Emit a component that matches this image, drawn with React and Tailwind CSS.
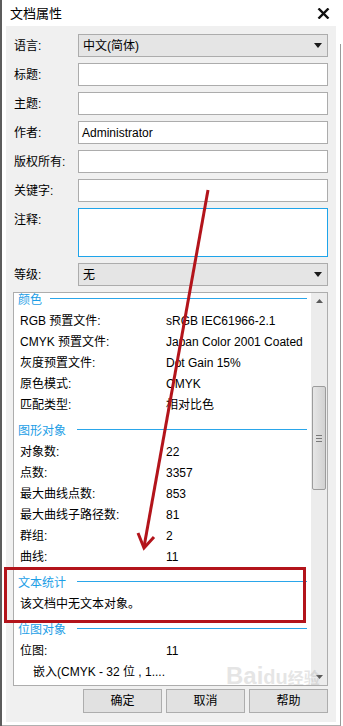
import React from 'react';

const font = "font-['Liberation_Sans','Noto_Sans_CJK_SC',sans-serif]";

const formRows = [
  { label: '语言:', kind: 'select', value: '中文(简体)' },
  { label: '标题:', kind: 'input' },
  { label: '主题:', kind: 'input' },
  { label: '作者:', kind: 'input', value: 'Administrator' },
  { label: '版权所有:', kind: 'input' },
  { label: '关键字:', kind: 'input' },
  { label: '注释:', kind: 'note' },
  { label: '等级:', kind: 'select', value: '无' },
];

const sections = [
  {
    title: '颜色',
    gap: 'ml-[8px]',
    rows: [
      ['RGB 预置文件:', 'sRGB IEC61966-2.1'],
      ['CMYK 预置文件:', 'Japan Color 2001 Coated'],
      ['灰度预置文件:', 'Dot Gain 15%'],
      ['原色模式:', 'CMYK'],
      ['匹配类型:', '相对比色'],
    ],
  },
  {
    title: '图形对象',
    gap: 'ml-[11px]',
    rows: [
      ['对象数:', '22'],
      ['点数:', '3357'],
      ['最大曲线点数:', '853'],
      ['最大曲线子路径数:', '81'],
      ['群组:', '2'],
      ['曲线:', '11'],
    ],
  },
  {
    title: '文本统计',
    gap: 'ml-[11px]',
    rows: [['该文档中无文本对象。', '']],
  },
  {
    title: '位图对象',
    gap: 'ml-[11px]',
    rows: [['位图:', '11']],
    extra: '嵌入(CMYK - 32 位 , 1....',
  },
];

function DownTriangle() {
  return (
    <svg width="8" height="5" viewBox="0 0 8 5">
      <path d="M0 0 H8 L4 5 Z" fill="#1a1a1a" />
    </svg>
  );
}

function FormRow({ row }) {
  let control;
  if (row.kind === 'select') {
    control = (
      <div className="flex-1 h-[23px] bg-[#e5e5e5] border border-[#acacac] flex items-center justify-between pl-[4px] pr-[5px]">
        <span className="text-[12px] leading-none text-black">{row.value}</span>
        <DownTriangle />
      </div>
    );
  } else if (row.kind === 'note') {
    control = <div className="flex-1 h-[49px] bg-white border border-[#1ea4ea]" />;
  } else {
    control = (
      <div className="flex-1 h-[23px] bg-white border border-[#acacac] flex items-center pl-[3px]">
        <span className="text-[12px] leading-none text-black">{row.value}</span>
      </div>
    );
  }
  return (
    <div className="flex items-start">
      <div
        className={
          'w-[64px] shrink-0 text-[12px] text-black leading-none ' +
          (row.kind === 'note' ? 'pt-[6px]' : 'h-[23px] flex items-center')
        }
      >
        {row.label}
      </div>
      {control}
    </div>
  );
}

function Section({ section, first }) {
  return (
    <div className={first ? '' : 'mt-[5px]'}>
      <div className="h-[21px] flex items-center pl-[4px]">
        <span className="text-[12px] leading-none text-[#1c9ee6]">{section.title}</span>
        <div className={'flex-1 h-px bg-[#2aa6ea] -mt-[2px] mr-[4px] ' + section.gap} />
      </div>
      {section.rows.map(([k, v]) => (
        <div key={k} className="h-[21px] flex items-center pl-[6px] text-[12px] leading-none text-black">
          <span className="w-[146px] shrink-0 whitespace-nowrap">{k}</span>
          <span className="whitespace-nowrap">{v}</span>
        </div>
      ))}
      {section.extra && (
        <div className="h-[21px] flex items-center pl-[19px] text-[12px] leading-none text-black whitespace-nowrap">
          {section.extra}
        </div>
      )}
    </div>
  );
}

function Scrollbar() {
  return (
    <div className="w-[16px] shrink-0 bg-[#ececec] flex flex-col items-center">
      <div className="h-[16px] flex items-center justify-center">
        <svg width="7" height="4" viewBox="0 0 7 4">
          <path d="M0 4 H7 L3.5 0 Z" fill="#5a5a5a" />
        </svg>
      </div>
      <div className="h-[77px]" />
      <div className="w-[14px] h-[104px] rounded-[2px] border border-[#9c9c9c] bg-[linear-gradient(90deg,#e6e6e6,#d2d2d2)] flex flex-col items-center justify-center gap-[2px]">
        <div className="w-[6px] h-px bg-[#7a7a7a]" />
        <div className="w-[6px] h-px bg-[#7a7a7a]" />
        <div className="w-[6px] h-px bg-[#7a7a7a]" />
      </div>
      <div className="flex-1" />
      <div className="h-[16px] flex items-center justify-center">
        <svg width="7" height="4" viewBox="0 0 7 4">
          <path d="M0 0 H7 L3.5 4 Z" fill="#5a5a5a" />
        </svg>
      </div>
    </div>
  );
}

export default function App() {
  return (
    <div className={'relative w-[343px] h-[726px] overflow-hidden bg-white flex ' + font}>
      <div className="w-[2px] h-full bg-[#5c5c5c]" />
      <div className="w-[338px] h-full flex flex-col bg-white px-[4px] pb-[3px] border-b border-[#b0b0b0]">
        {/* title bar */}
        <div className="h-[26px] shrink-0 flex items-center justify-between pl-[4px] pr-[6px]">
          <span className="text-[13px] leading-none text-black">文档属性</span>
          <svg width="13" height="11" viewBox="0 0 13 11">
            <path d="M1.5 0.5 L11.5 10.5 M11.5 0.5 L1.5 10.5" stroke="#111" strokeWidth="2.4" />
          </svg>
        </div>

        {/* client area */}
        <div className="flex-1 bg-[#f0f0f0] flex flex-col pt-[8px] pl-[8px] pr-[8px]">
          <div className="flex flex-col gap-[6px]">
            {formRows.map((r) => (
              <FormRow key={r.label} row={r} />
            ))}
          </div>

          <div className="mt-[6px] -ml-[1px] h-[394px] bg-white border border-[#adadad] flex overflow-hidden">
            <div className="flex-1 overflow-hidden">
              <div className="-mt-[4px]">
                {sections.map((s, i) => (
                  <Section key={s.title} section={s} first={i === 0} />
                ))}
              </div>
            </div>
            <Scrollbar />
          </div>

          <div className="mt-[3px] flex justify-end gap-[4px]">
            {['确定', '取消', '帮助'].map((b) => (
              <div
                key={b}
                className="w-[79px] h-[24px] bg-[#e1e1e1] border border-[#adadad] flex items-center justify-center text-[12px] leading-none text-black"
              >
                {b}
              </div>
            ))}
          </div>
        </div>
      </div>
      <div className="flex-1 h-full pt-[44px]">
        <div className="w-px h-full bg-[#9a9a9a]" />
      </div>

      {/* watermark */}
      <div className="absolute left-[226px] top-[664px] opacity-25 pointer-events-none">
        <span className="text-[24px] font-bold leading-none text-[#9a9a9a]">
          Bai<span className="text-[20px]">du</span>
          <span className="text-[16px]">经验</span>
        </span>
      </div>

      {/* red annotation box */}
      <div className="absolute left-[4px] top-[567px] w-[302px] h-[56px] border-[3px] border-[#b3141b] pointer-events-none" />

      {/* red annotation arrow */}
      <svg className="absolute left-0 top-0 pointer-events-none" width="343" height="726" viewBox="0 0 343 726">
        <path d="M208 190 L144 547" stroke="#b3141b" strokeWidth="3" fill="none" />
        <path d="M138 533 L144 548 L154 537" stroke="#b3141b" strokeWidth="3" fill="none" strokeLinejoin="miter" />
      </svg>
    </div>
  );
}
